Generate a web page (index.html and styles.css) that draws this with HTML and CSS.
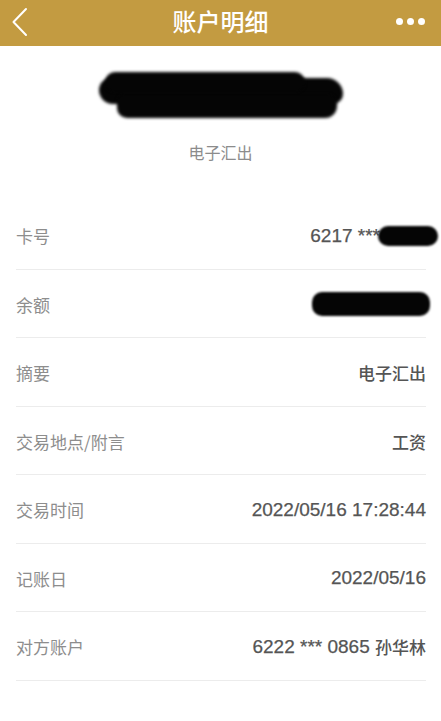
FILE: index.html
```html
<!DOCTYPE html>
<html lang="zh">
<head>
<meta charset="utf-8">
<title>账户明细</title>
<link rel="stylesheet" href="styles.css">
</head>
<body>
<header class="nav">
  <svg class="back" width="20" height="30" viewBox="0 0 20 30"><path d="M16 2 L3.5 15 L16 28" fill="none" stroke="#fff" stroke-width="2" stroke-linecap="round" stroke-linejoin="round"/></svg>
  <h1 class="title">账户明细</h1>
  <div class="more"><span></span><span></span><span></span></div>
</header>
<section class="summary">
  <div class="redact-big"><i class="r1"></i><i class="r2"></i><i class="r3"></i></div>
  <div class="type">电子汇出</div>
</section>
<ul class="list">
  <li class="row"><span class="label">卡号</span><span class="value">6217 ***<i class="redact-sm"></i></span></li>
  <li class="row"><span class="label">余额</span><span class="value"><i class="redact-md"></i></span></li>
  <li class="row"><span class="label">摘要</span><span class="value"><span class="cjk">电子汇出</span></span></li>
  <li class="row"><span class="label">交易地点/附言</span><span class="value"><span class="cjk">工资</span></span></li>
  <li class="row"><span class="label">交易时间</span><span class="value">2022/05/16 17:28:44</span></li>
  <li class="row"><span class="label">记账日</span><span class="value">2022/05/16</span></li>
  <li class="row"><span class="label">对方账户</span><span class="value">6222 *** 0865&nbsp;<span class="cjk">孙华林</span></span></li>
</ul>
</body>
</html>
```
FILE: styles.css
```css
* { box-sizing: border-box; }
html, body { margin: 0; padding: 0; background: #fff; }
body {
  font-family: "Liberation Sans", "Noto Sans CJK SC", sans-serif;
  width: 441px;
  overflow: hidden;
}
.nav {
  height: 46px;
  background: #c39b41;
  display: flex;
  align-items: center;
  justify-content: space-between;
  padding: 0 16px 0 10px;
  position: relative;
}
.back { display: block; margin-top: -2px; }
.title {
  margin: 0;
  position: absolute;
  left: 0; right: 0; top: 0;
  line-height: 42px;
  text-align: center;
  color: #fff;
  font-size: 24px;
  font-weight: 500;
  font-family: "Noto Sans CJK SC", sans-serif;
  pointer-events: none;
}
.more { display: flex; gap: 4px; margin-top: -4px; }
.more span { width: 7px; height: 7px; border-radius: 50%; background: #fff; display: block; }
.summary {
  height: 155px;
  display: flex;
  flex-direction: column;
  align-items: center;
  padding-top: 26px;
}
.redact-big { position: relative; width: 244px; height: 50px; margin-left: 0; }
.redact-big i { position: absolute; background: #050505; display: block; filter: blur(1.5px); }
.redact-big .r1 { left: 0; top: 6px; width: 244px; height: 26px; border-radius: 12px 16px 10px 14px; }
.redact-big .r2 { left: 18px; top: 22px; width: 220px; height: 24px; border-radius: 8px 10px 12px 10px; }
.redact-big .r3 { left: 6px; top: 0; width: 200px; height: 20px; border-radius: 10px; }
.type {
  margin-top: 18px;
  font-family: "Noto Sans CJK SC", sans-serif;
  font-size: 16px;
  color: #8c8c8c;
}
.list { list-style: none; margin: 0; padding: 0 15px 0 16px; }
.row {
  height: 68.5px;
  border-bottom: 1px solid #ececec;
  display: flex;
  align-items: center;
  justify-content: space-between;
  padding-top: 2px;
}
.label {
  font-family: "Noto Sans CJK SC", sans-serif;
  font-size: 17px;
  color: #8d8d8d;
}
.value {
  font-size: 19px;
  color: #555;
  display: flex;
  align-items: center;
  -webkit-text-stroke: 0.25px #555;
}
.cjk {
  font-family: "Noto Sans CJK SC", sans-serif;
  font-size: 17px;
  font-weight: 500;
  -webkit-text-stroke: 0;
}
.redact-sm { display: block; width: 60px; height: 20px; background: #050505; border-radius: 10px; filter: blur(1.2px); margin-right: -12px; margin-left: -2px; }
.redact-md { display: block; width: 118px; height: 24px; background: #050505; border-radius: 10px; filter: blur(1.2px); margin-right: -4px; }
```
